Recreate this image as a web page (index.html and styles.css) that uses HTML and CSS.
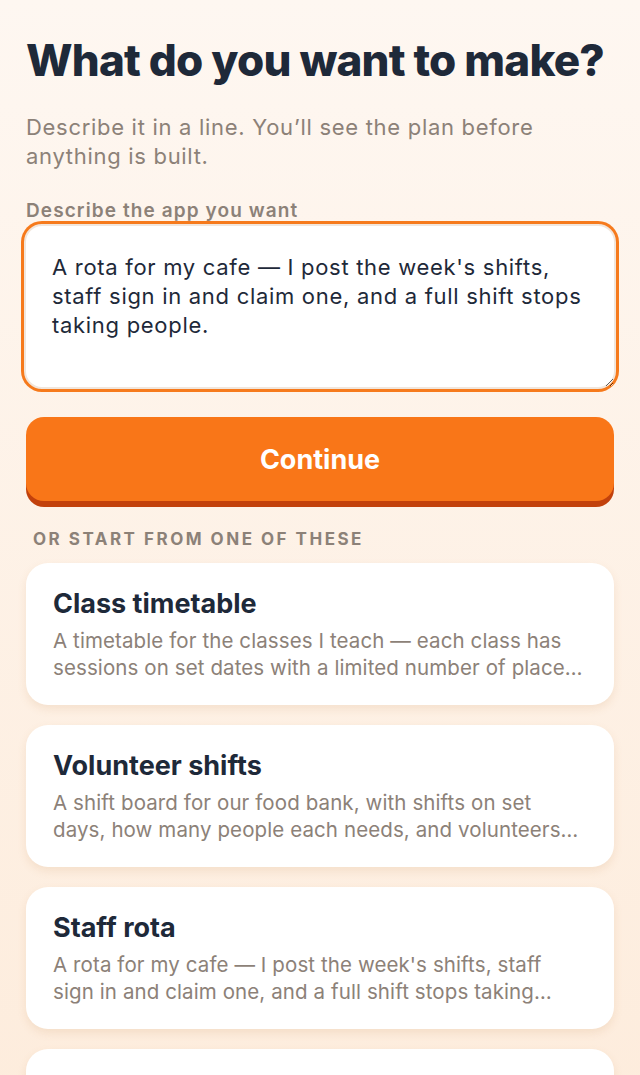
FILE: index.html
```html
<!DOCTYPE html>
<html lang="en">
<head>
<meta charset="utf-8">
<title>What do you want to make?</title>
<link rel="stylesheet" href="styles.css">
</head>
<body>
<div class="page">
  <h1 class="title">What do you want to make?</h1>
  <p class="lede">Describe it in a line. You’ll see the plan before anything is built.</p>

  <label class="field-label" for="idea">Describe the app you want</label>
  <textarea id="idea" class="idea">A rota for my cafe — I post the week's shifts, staff sign in and claim one, and a full shift stops taking people.</textarea>

  <button class="continue" type="button">Continue</button>

  <div class="section-label">Or start from one of these</div>

  <div class="starters">
    <div class="starter">
      <div class="starter-name">Class timetable</div>
      <div class="starter-desc">A timetable for the classes I teach — each class has sessions on set dates with a limited number of places, and people book a spot.</div>
    </div>
    <div class="starter">
      <div class="starter-name">Volunteer shifts</div>
      <div class="starter-desc">A shift board for our food bank, with shifts on set days, how many people each needs, and volunteers sign up for them.</div>
    </div>
    <div class="starter">
      <div class="starter-name">Staff rota</div>
      <div class="starter-desc">A rota for my cafe — I post the week's shifts, staff sign in and claim one, and a full shift stops taking people.</div>
    </div>
    <div class="starter">
      <div class="starter-name">Room bookings</div>
      <div class="starter-desc">A booking page for our meeting rooms, so people can see what is free and reserve a slot.</div>
    </div>
  </div>
</div>
</body>
</html>
```

FILE: styles.css
```css
html, body {
  margin: 0;
  padding: 0;
}

body {
  font-family: Inter, "Noto Sans", sans-serif;
  background: linear-gradient(180deg, #fef7f1 0%, #fdebda 100%);
  min-height: 1075px;
  color: #1e2939;
}

.page {
  padding: 34px 26px 40px;
}

.title {
  font-size: 44px;
  font-weight: 800;
  letter-spacing: -0.8px;
  line-height: 53px;
  margin: 0 0 26px;
  color: #1e2939;
}

.lede {
  font-size: 22px;
  line-height: 29px;
  letter-spacing: 0.7px;
  color: #8c8178;
  margin: 0 0 29px;
}

.field-label {
  display: block;
  font-size: 19px;
  line-height: 22px;
  font-weight: 600;
  letter-spacing: 1.1px;
  color: #8c8178;
  margin-bottom: 2px;
}

.idea {
  display: block;
  box-sizing: border-box;
  width: calc(100% + 4px);
  margin: 0 -2px;
  height: 165px;
  padding: 27px 26px;
  border: 2px solid #f1e6dc;
  border-radius: 18px;
  box-shadow: 0 0 0 3px #f67a1c;
  background: #fff;
  font-family: inherit;
  font-size: 22px;
  line-height: 29px;
  letter-spacing: 0.7px;
  color: #1e2939;
  resize: vertical;
  outline: none;
}

.continue {
  display: block;
  width: 100%;
  height: 84px;
  margin: 28px 0 0;
  border: 0;
  border-radius: 18px;
  background: #f97618;
  box-shadow: 0 6px 0 #c2410c;
  color: #fff;
  font-family: inherit;
  font-size: 27px;
  font-weight: 700;
}

.section-label {
  margin: 28px 0 14px 7px;
  font-size: 17px;
  line-height: 20px;
  font-weight: 700;
  letter-spacing: 2.5px;
  text-transform: uppercase;
  color: #8c8178;
}

.starters {
  display: flex;
  flex-direction: column;
  gap: 20px;
}

.starter {
  background: #fff;
  border-radius: 22px;
  padding: 25px 27px 24px;
  box-shadow: 0 4px 8px rgba(200, 140, 90, 0.16);
}

.starter-name {
  font-size: 27px;
  line-height: 32px;
  font-weight: 700;
  color: #1e2939;
  margin-bottom: 7px;
}

.starter-desc {
  font-size: 20.5px;
  line-height: 27px;
  letter-spacing: 0.1px;
  color: #8c8178;
  display: -webkit-box;
  -webkit-line-clamp: 2;
  -webkit-box-orient: vertical;
  overflow: hidden;
}
```
